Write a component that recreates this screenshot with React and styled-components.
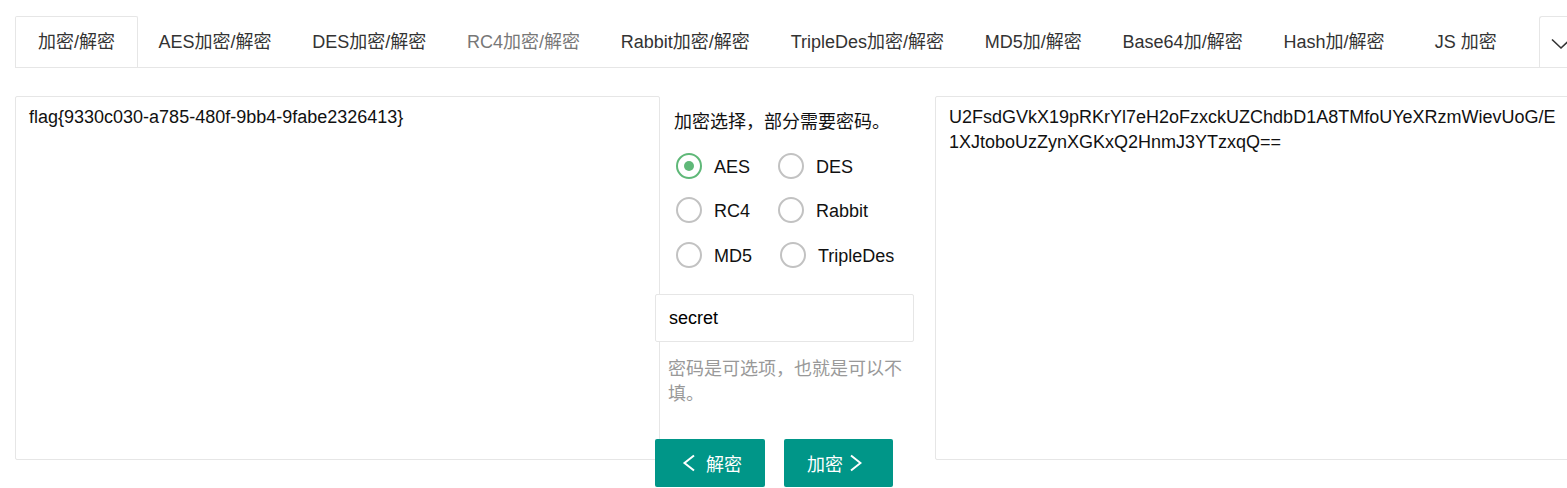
import styled, { createGlobalStyle } from 'styled-components';

const GlobalStyle = createGlobalStyle`
  html, body {
    margin: 0;
    padding: 0;
    background: #fff;
    overflow: hidden;
  }
  body {
    font-family: "Liberation Sans", "Noto Sans CJK SC", sans-serif;
    color: #333;
  }
`;

const tabs = [
  { label: '加密/解密', active: true },
  { label: 'AES加密/解密' },
  { label: 'DES加密/解密' },
  { label: 'RC4加密/解密', muted: true },
  { label: 'Rabbit加密/解密' },
  { label: 'TripleDes加密/解密' },
  { label: 'MD5加/解密' },
  { label: 'Base64加/解密' },
  { label: 'Hash加/解密' },
  { label: 'JS 加密', wide: true },
];

const radios = [
  { label: 'AES', checked: true },
  { label: 'DES' },
  { label: 'RC4' },
  { label: 'Rabbit' },
  { label: 'MD5' },
  { label: 'TripleDes' },
];

const cipherText =
  'U2FsdGVkX19pRKrYl7eH2oFzxckUZChdbD1A8TMfoUYeXRzmWievUoG/E1XJtoboUzZynXGKxQ2HnmJ3YTzxqQ==';

const ChevronLeft = () => (
  <svg width='21' height='18' viewBox='0 0 21 18'>
    <polyline points='16,1.5 6.5,9 16,16.5' fill='none' stroke='#fff' strokeWidth='2' />
  </svg>
);

const ChevronRight = () => (
  <svg width='12' height='18' viewBox='0 0 12 18'>
    <polyline points='1,1.5 10.5,9 1,16.5' fill='none' stroke='#fff' strokeWidth='2' />
  </svg>
);

const App = () => {
  return (
    <Page>
      <GlobalStyle />
      <TabBar>
        <TabList>
          {tabs.map((t) => (
            <Tab key={t.label} active={t.active} muted={t.muted} wide={t.wide}>
              {t.label}
            </Tab>
          ))}
        </TabList>
        <TabMore>
          <svg width='20' height='12' viewBox='0 0 20 12'>
            <polyline points='1,1.5 10,10 19,1.5' fill='none' stroke='#333' strokeWidth='1.6' />
          </svg>
        </TabMore>
      </TabBar>

      <Content>
        <TextArea defaultValue='flag{9330c030-a785-480f-9bb4-9fabe2326413}' />

        <Middle>
          <Label>加密选择，部分需要密码。</Label>
          <RadioGroup>
            {radios.map((r) => (
              <RadioItem key={r.label}>
                <RadioCircle checked={r.checked} />
                <RadioText>{r.label}</RadioText>
              </RadioItem>
            ))}
          </RadioGroup>
          <Controls>
            <Input defaultValue='secret' />
            <Hint>密码是可选项，也就是可以不填。</Hint>
            <Buttons>
              <Button width={110}>
                <ChevronLeft />
                <ButtonText left>解密</ButtonText>
              </Button>
              <Button width={109}>
                <ButtonText>加密</ButtonText>
                <ChevronRight />
              </Button>
            </Buttons>
          </Controls>
        </Middle>

        <TextArea width={640} defaultValue={cipherText} />
      </Content>
    </Page>
  );
};

const Page = styled.div`
  width: 1580px;
  padding: 16px 0 0 15px;
  box-sizing: border-box;
`;

const TabBar = styled.div`
  position: relative;
  width: 1565px;
  height: 52px;
  box-sizing: border-box;
  border-bottom: 1px solid #e6e6e6;
`;

const TabList = styled.ul`
  display: flex;
  margin: 0;
  padding: 0;
  list-style: none;
  height: 51px;
  overflow: hidden;
`;

const Tab = styled.li`
  flex-shrink: 0;
  height: 51px;
  box-sizing: border-box;
  padding: 0 ${(p) => (p.active ? '22px' : p.wide ? '29px' : '19.4px')};
  font-size: 18px;
  line-height: 50px;
  white-space: nowrap;
  color: ${(p) => (p.muted ? '#777' : '#333')};
  background: #fff;
  border: 1px solid ${(p) => (p.active ? '#e6e6e6' : 'transparent')};
  border-bottom: none;
  border-radius: 2px 2px 0 0;
`;

const TabMore = styled.div`
  position: absolute;
  top: 0;
  left: 1524px;
  width: 42px;
  height: 51px;
  box-sizing: border-box;
  border: 1px solid #e6e6e6;
  border-bottom: none;
  border-right: none;
  border-radius: 3px 0 0 0;
  background: #fff;
  display: flex;
  align-items: center;
  justify-content: center;
  padding-top: 4px;
`;

const Content = styled.div`
  display: flex;
  align-items: flex-start;
  margin-top: 28px;
`;

const TextArea = styled.textarea`
  flex-shrink: 0;
  width: ${(p) => p.width || 645}px;
  height: 364px;
  box-sizing: border-box;
  margin: 0;
  padding: 7.5px 13px;
  border: 1px solid #e6e6e6;
  border-radius: 2px;
  resize: none;
  outline: none;
  font-family: "Liberation Sans", "Noto Sans CJK SC", sans-serif;
  font-size: 18px;
  line-height: 25px;
  color: #111;
  word-break: break-all;
  overflow: hidden;
  background: #fff;
`;

const Middle = styled.div`
  flex-shrink: 0;
  width: 275px;
  padding-top: 13.5px;
  box-sizing: border-box;
  display: flex;
  flex-direction: column;
`;

const Label = styled.div`
  padding-left: 14px;
  font-size: 18px;
  line-height: 25px;
  color: #111;
`;

const RadioGroup = styled.div`
  display: flex;
  flex-wrap: wrap;
  padding-left: 16px;
  margin-top: 6px;
  width: 250px;
`;

const RadioItem = styled.label`
  display: flex;
  align-items: center;
  height: 36px;
  margin-top: 8.5px;
  margin-right: 28px;
  cursor: pointer;
`;

const RadioCircle = styled.span`
  position: relative;
  width: 26px;
  height: 26px;
  box-sizing: border-box;
  border-radius: 50%;
  border: 2px solid ${(p) => (p.checked ? '#5FB878' : '#c2c2c2')};
  margin-right: 12px;
  margin-top: -3px;

  &::after {
    content: '';
    display: ${(p) => (p.checked ? 'block' : 'none')};
    position: absolute;
    top: 6px;
    left: 6px;
    width: 10px;
    height: 10px;
    border-radius: 50%;
    background: #5FB878;
  }
`;

const RadioText = styled.span`
  font-size: 18px;
  color: #111;
`;

const Controls = styled.div`
  margin-left: -5px;
  width: 259px;
  margin-top: 20px;
`;

const Input = styled.input`
  display: block;
  width: 259px;
  height: 48px;
  box-sizing: border-box;
  margin: 0;
  padding: 0 13px;
  border: 1px solid #e6e6e6;
  border-radius: 2px;
  outline: none;
  font-family: "Liberation Sans", "Noto Sans CJK SC", sans-serif;
  font-size: 18px;
  color: #000;
  background: #fff;
`;

const Hint = styled.div`
  margin-top: 14.5px;
  padding-left: 13px;
  font-size: 18px;
  line-height: 25px;
  color: #999;
`;

const Buttons = styled.div`
  display: flex;
  gap: 19px;
  margin-top: 32.5px;
`;

const Button = styled.button`
  display: flex;
  align-items: center;
  width: ${(p) => p.width}px;
  height: 48px;
  padding: 0 0 0 23px;
  box-sizing: border-box;
  border: none;
  border-radius: 2px;
  background: #009688;
  color: #fff;
  font-family: "Liberation Sans", "Noto Sans CJK SC", sans-serif;
  font-size: 18px;
  cursor: pointer;
`;

const ButtonText = styled.span`
  margin: ${(p) => (p.left ? '0 0 0 7px' : '0 7px 0 0')};
`;

export default App;
